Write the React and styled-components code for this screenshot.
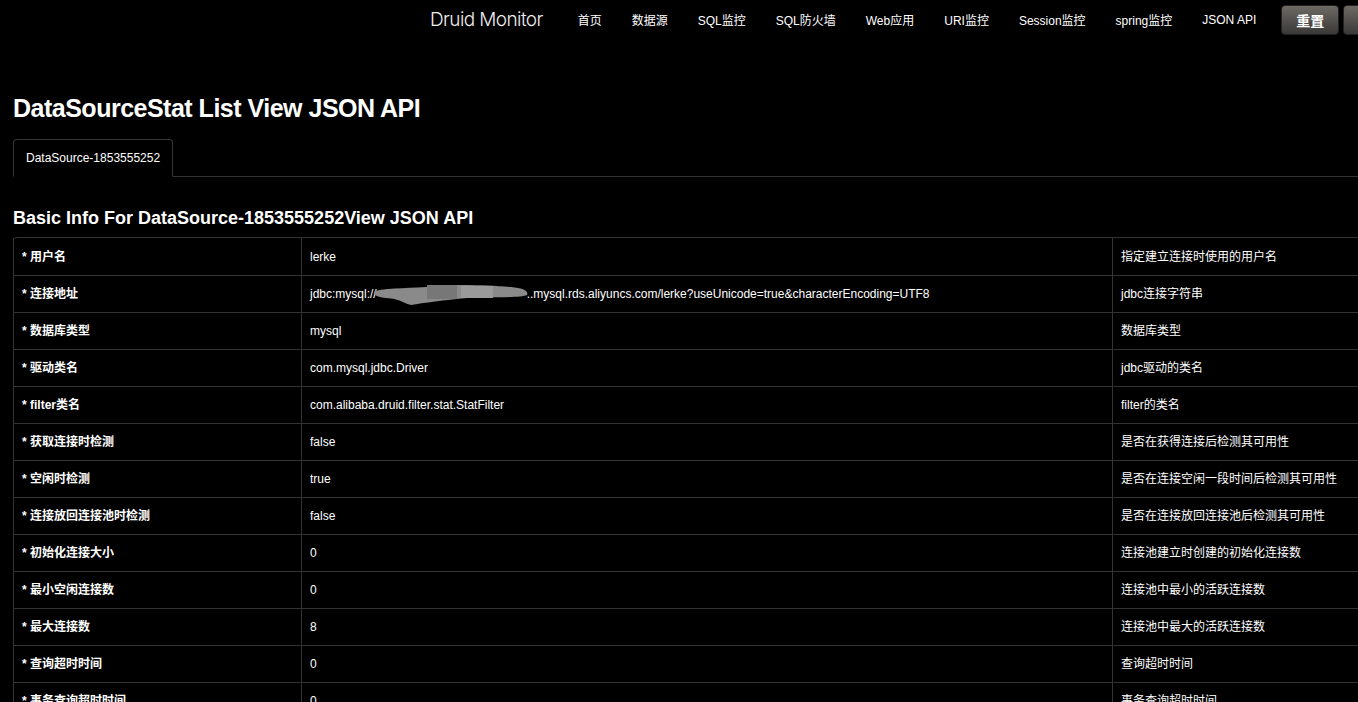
import React from 'react';
import styled, { createGlobalStyle } from 'styled-components';

const GlobalStyle = createGlobalStyle`
  html, body {
    margin: 0;
    background: #000;
    color: #fff;
    font-family: "Liberation Sans", "Noto Sans CJK SC", Arial, sans-serif;
    overflow: hidden;
  }
`;

const Page = styled.div`
  width: 1600px;
`;

// 상단 네비게이션
const Navbar = styled.div`
  display: flex;
  align-items: center;
  height: 39px;
  padding-left: 410px;
  white-space: nowrap;
`;

const Brand = styled.a`
  padding: 0 20px;
  font-family: "Inter", "Liberation Sans", sans-serif;
  font-weight: 300;
  font-size: 19px;
  color: #eee;
  letter-spacing: -0.6px;
`;

const NavLink = styled.a`
  padding: 0 15px;
  font-size: 12px;
  color: #fff;
`;

const Btn = styled.button`
  margin-left: ${(p) => (p.first ? '10px' : '4px')};
  height: 30px;
  padding: 0 14px;
  border: 1px solid #222;
  border-radius: 4px;
  background: linear-gradient(#6d6965, #3a3937);
  color: #fff;
  font-family: "Liberation Sans", "Noto Sans CJK SC", sans-serif;
  font-size: 14px;
  font-weight: bold;
`;

const Main = styled.div`
  padding: 0 13px;
`;

const Title = styled.h2`
  margin: 49px 0 11px;
  font-size: 25px;
  letter-spacing: -0.5px;
  line-height: 40px;
  font-weight: bold;
`;

const Tabs = styled.div`
  display: flex;
  border-bottom: 1px solid #333;
`;

const Tab = styled.div`
  padding: 8px 12px;
  line-height: 20px;
  font-size: 12px;
  border: 1px solid #333;
  border-bottom-color: #000;
  border-radius: 4px 4px 0 0;
  margin-bottom: -1px;
`;

const SubTitle = styled.h3`
  margin: 31px 0 9px;
  font-size: 18px;
  line-height: 20px;
  font-weight: bold;
`;

const Table = styled.table`
  border-collapse: separate;
  border-spacing: 0;
  border: 1px solid #333;
  border-left: 0;
  border-radius: 4px;
  width: 1500px;
  table-layout: fixed;
  font-size: 12px;
`;

const Cell = styled.td`
  box-sizing: border-box;
  padding: 8px;
  line-height: 20px;
  height: 37px;
  border-left: 1px solid #333;
  border-top: ${(p) => (p.first ? '0' : '1px solid #333')};
  font-weight: ${(p) => (p.bold ? 'bold' : 'normal')};
  text-align: left;
  white-space: nowrap;
  ${(p) => p.w && `width: ${p.w}px;`}
`;

const Smudge = styled.svg`
  display: inline-block;
  vertical-align: middle;
  margin: -6px -4px -6px -6px;
`;

const rows = [
  ['用户名', 'lerke', '指定建立连接时使用的用户名'],
  ['连接地址', 'url', 'jdbc连接字符串'],
  ['数据库类型', 'mysql', '数据库类型'],
  ['驱动类名', 'com.mysql.jdbc.Driver', 'jdbc驱动的类名'],
  ['filter类名', 'com.alibaba.druid.filter.stat.StatFilter', 'filter的类名'],
  ['获取连接时检测', 'false', '是否在获得连接后检测其可用性'],
  ['空闲时检测', 'true', '是否在连接空闲一段时间后检测其可用性'],
  ['连接放回连接池时检测', 'false', '是否在连接放回连接池后检测其可用性'],
  ['初始化连接大小', '0', '连接池建立时创建的初始化连接数'],
  ['最小空闲连接数', '0', '连接池中最小的活跃连接数'],
  ['最大连接数', '8', '连接池中最大的活跃连接数'],
  ['查询超时时间', '0', '查询超时时间'],
  ['事务查询超时时间', '0', '事务查询超时时间'],
  ['登录超时时间', '0', '登录超时时间'],
];

const navs = ['首页', '数据源', 'SQL监控', 'SQL防火墙', 'Web应用', 'URI监控', 'Session监控', 'spring监控', 'JSON API'];

function UrlValue() {
  return (
    <>
      jdbc:mysql://
      <Smudge width="160" height="24" viewBox="0 0 160 24">
        <path d="M4 8 C20 4 40 6 64 3 C86 1 118 2 140 4 C152 5 158 8 156 12 C150 15 118 14 96 15 C74 17 52 20 40 22 C32 20 30 16 15 15 C6 14 0 11 4 8 Z" fill="#8a8a8a" />
        <rect x="56" y="2" width="30" height="14" fill="#777" />
        <rect x="90" y="3" width="32" height="12" fill="#9a9a9a" />
      </Smudge>
      ..mysql.rds.aliyuncs.com/lerke?useUnicode=true&amp;characterEncoding=UTF8
    </>
  );
}

export default function App() {
  return (
    <Page>
      <GlobalStyle />
      <Navbar>
        <Brand>Druid Monitor</Brand>
        {navs.map((n) => (
          <NavLink key={n}>{n}</NavLink>
        ))}
        <Btn first>重置</Btn>
        <Btn>记录日志并重置</Btn>
      </Navbar>
      <Main>
        <Title>DataSourceStat List View JSON API</Title>
        <Tabs>
          <Tab>DataSource-1853555252</Tab>
        </Tabs>
        <SubTitle>Basic Info For DataSource-1853555252View JSON API</SubTitle>
        <Table>
          <tbody>
            {rows.map((r, i) => (
              <tr key={r[0]}>
                <Cell first={i === 0} bold w={288}>* {r[0]}</Cell>
                <Cell first={i === 0} w={811}>{r[1] === 'url' ? <UrlValue /> : r[1]}</Cell>
                <Cell first={i === 0}>{r[2]}</Cell>
              </tr>
            ))}
          </tbody>
        </Table>
      </Main>
    </Page>
  );
}
